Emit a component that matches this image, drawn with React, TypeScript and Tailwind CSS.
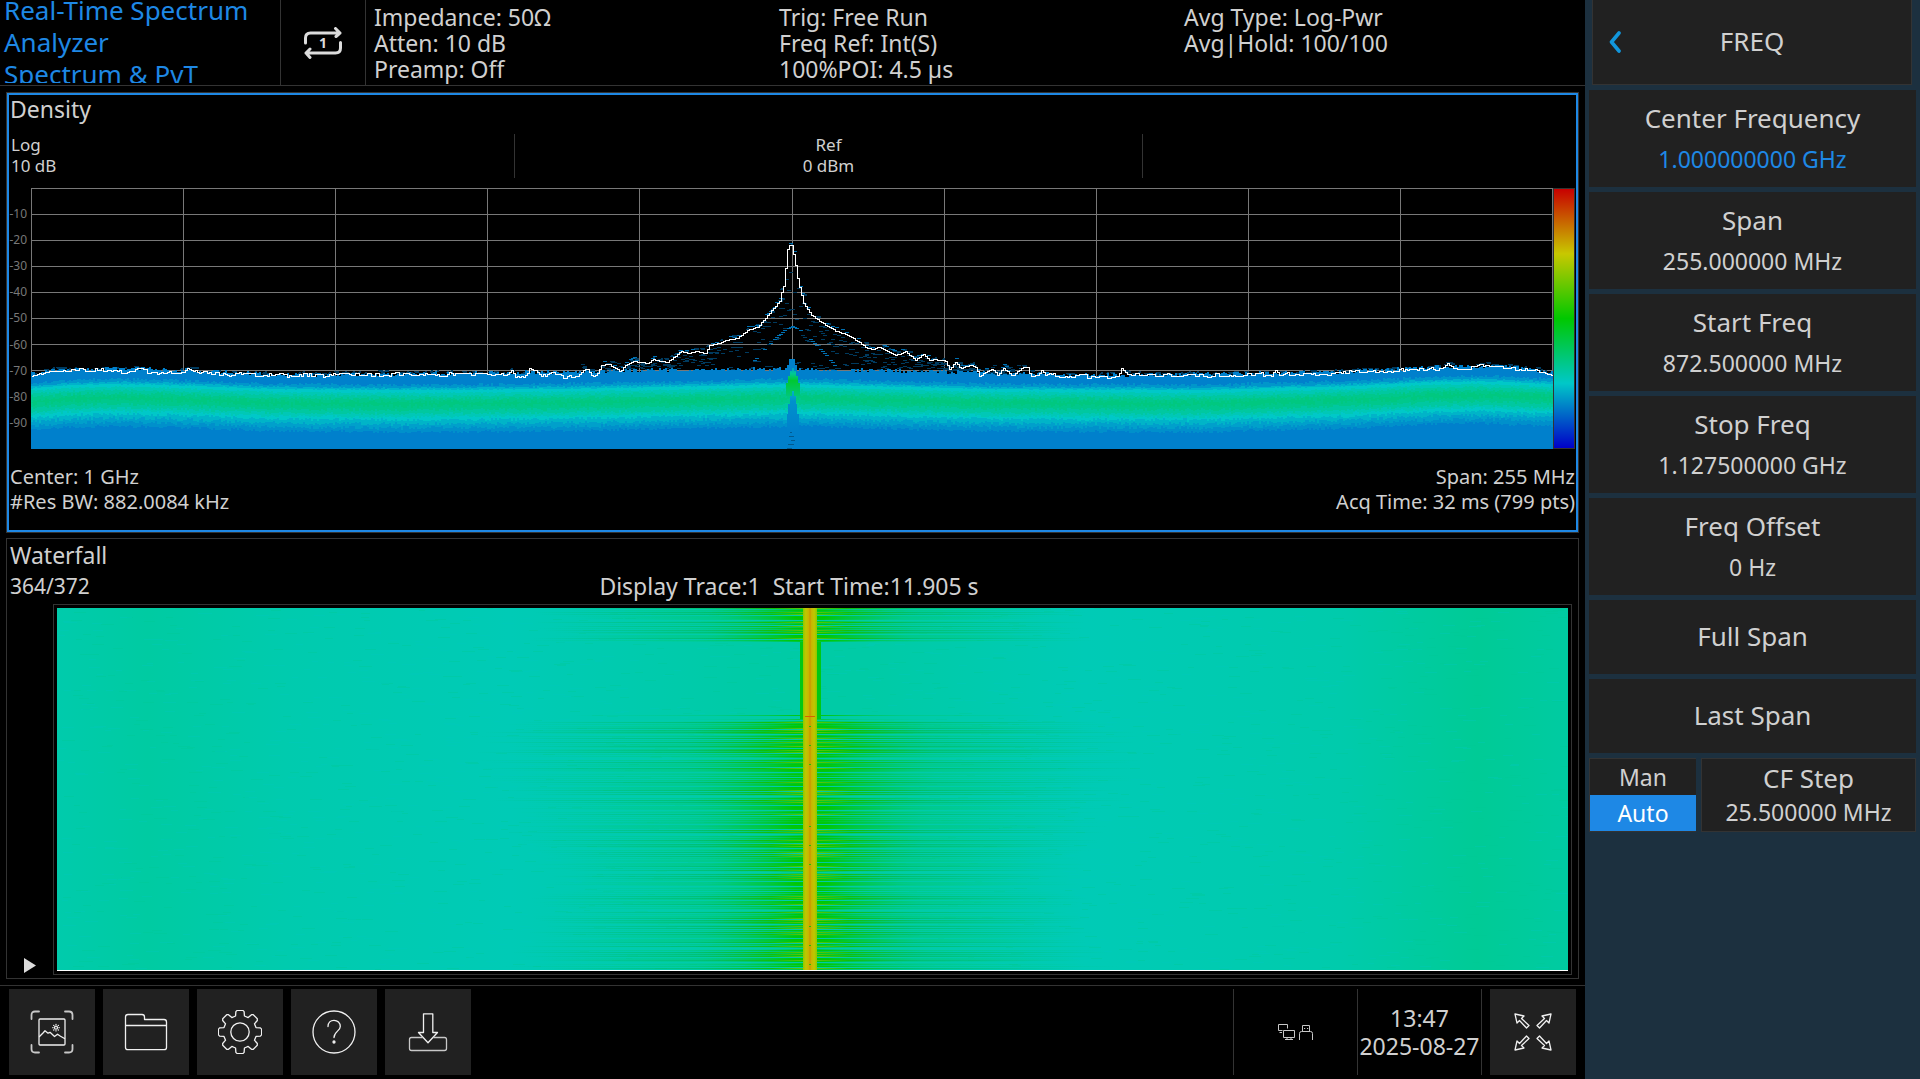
import React from 'react';

type Point = [number, number];

// Small seeded generator so the traces look the same on every render
const createRandom = (seed: number) => () => {
  seed = (seed + 0x6d2b79f5) | 0;
  let t = Math.imul(seed ^ (seed >>> 15), 1 | seed);
  t = (t + Math.imul(t ^ (t >>> 7), 61 | t)) ^ t;
  return ((t ^ (t >>> 14)) >>> 0) / 4294967296;
};

const interpolate = (points: Point[], x: number) => {
  for (let i = 1; i < points.length; i++) {
    const [x0, y0] = points[i - 1];
    const [x1, y1] = points[i];
    if (x <= x1) return y0 + ((y1 - y0) * (x - x0)) / (x1 - x0);
  }
  return points[points.length - 1][1];
};

const PLOT_W = 1522;
const PLOT_H = 261;

const maxHold: Point[] = [
  [0, 189], [6, 185], [22, 182], [60, 182], [85, 181], [88, 184], [106, 181], [112, 181], [116, 184], [150, 184],
  [155, 180], [166, 184], [200, 186], [270, 187], [350, 186], [416, 186], [419, 183], [422, 186], [475, 186],
  [479, 182], [484, 188], [492, 188], [498, 181], [504, 181], [507, 187], [516, 188], [520, 185], [532, 189],
  [546, 187], [553, 181], [556, 181], [561, 189], [566, 185], [570, 177], [577, 176], [582, 179], [589, 183],
  [592, 179], [601, 173], [617, 175], [621, 171], [636, 174], [642, 169], [650, 163], [657, 165], [664, 163],
  [674, 165], [678, 157], [687, 155], [694, 152], [706, 150], [717, 141], [726, 139], [737, 126], [744, 118],
  [748, 113], [750, 104], [752, 98], [753, 90], [755, 71], [756, 61], [757, 57], [760, 57], [761, 61], [763, 71],
  [766, 90], [769, 103], [772, 115], [776, 121], [780, 127], [789, 133], [795, 138], [805, 143], [817, 147],
  [826, 153], [836, 160], [842, 161], [847, 158], [854, 162], [864, 167], [874, 163], [884, 172], [892, 166],
  [899, 173], [902, 171], [914, 173], [918, 181], [924, 174], [929, 180], [939, 177], [944, 179], [948, 188],
  [954, 184], [961, 180], [966, 187], [972, 180], [981, 188], [991, 179], [996, 179], [999, 188], [1006, 187],
  [1010, 182], [1014, 188], [1021, 185], [1024, 188], [1086, 188], [1090, 181], [1096, 187], [1170, 187],
  [1240, 186], [1243, 181], [1247, 186], [1300, 185], [1340, 183], [1380, 181], [1410, 180], [1416, 175],
  [1422, 179], [1440, 180], [1448, 177], [1470, 179], [1500, 182], [1522, 186],
];

const floorTop: Point[] = [
  [0, 186], [22, 182], [110, 180], [168, 183], [270, 187], [420, 185], [550, 184], [620, 182], [750, 181],
  [880, 183], [960, 185], [1100, 187], [1300, 184], [1410, 179], [1470, 178], [1522, 184],
];

const bandCenter: Point[] = [
  [0, 212], [40, 209], [84, 208], [140, 209], [240, 213], [370, 214], [520, 213], [680, 210], [760, 208],
  [840, 210], [960, 213], [1170, 214], [1320, 210], [1400, 206], [1450, 205], [1522, 208],
];

const bandLevels = [
  { offset: -17, jitter: 1.4, color: '#0096cb' },
  { offset: -14, jitter: 0.8, color: '#00b2cb' },
  { offset: -12, jitter: 0.6, color: '#00c8c8' },
  { offset: -9, jitter: 0.8, color: '#00c8b4' },
  { offset: -6, jitter: 1.2, color: '#00c8a0' },
  { offset: -3, jitter: 1.6, color: '#00c88c' },
  { offset: 0, jitter: 2, color: '#00c880' },
  { offset: 4, jitter: 2, color: '#00c88c' },
  { offset: 8, jitter: 1.6, color: '#00c8a0' },
  { offset: 12, jitter: 1.4, color: '#00c8b6' },
  { offset: 15, jitter: 1.4, color: '#00c8c8' },
  { offset: 18, jitter: 1.6, color: '#00b4c8' },
  { offset: 22, jitter: 1.8, color: '#00a0cb' },
  { offset: 26, jitter: 1.8, color: '#0090cb' },
  { offset: 30, jitter: 1.4, color: '#0080cc' },
];

const stepPath = (height: (x: number) => number) => {
  let d = '';
  for (let x = 0; x < PLOT_W; x += 2) {
    const y = Math.round(height(x));
    d += x === 0 ? `M0 ${y}H2` : `V${y}H${x + 2}`;
  }
  return d;
};

const buildDensity = () => {
  const random = createRandom(7);
  const area = (curve: Point[], offset: number, jitter: number) =>
    `${stepPath((x) => interpolate(curve, x) + offset + (random() * 2 - 1) * jitter)}V${PLOT_H}H0Z`;

  const floor = area(floorTop, 0, 2);
  const bands = bandLevels.map((level) => ({ color: level.color, d: area(bandCenter, level.offset, level.jitter) }));

  let hold = 0;
  const trace = stepPath((x) => {
    const quiet = x < 550 || x > 1010;
    if (x % 4 === 0 || random() < 0.3) hold = (random() * 2 - 1) * (quiet ? 1.8 : 0.2);
    return interpolate(maxHold, x) + hold;
  });

  // Faint hits just above the noise floor and under the skirts of the carrier
  let faint = '';
  let bright = '';
  for (let x = 0; x < PLOT_W; x += 2) {
    const top = interpolate(maxHold, x);
    const floorY = interpolate(floorTop, x);
    if (random() < 0.4) faint += `M${x} ${Math.round(top - 1 - random() * 3)}h${random() < 0.4 ? 6 : 2}v2h-4z`;
    if (x > 540 && x < 990) {
      const reach = floorY - top;
      [0.08, 0.2, 0.33, 0.5].forEach((part) => {
        if (random() < 0.35) faint += `M${x} ${Math.round(top + reach * part + random() * 3)}h4v1h-4z`;
      });
      if (random() < 0.4) faint += `M${x} ${Math.round(floorY - random() * 9)}h4v1h-4z`;
      if (random() < 0.3) bright += `M${x} ${Math.round(top - 1 - random() * 3)}h4v1h-4z`;
    }
    if (x > 716 && x < 806 && random() < 0.5) {
      const y = 138 + Math.pow(Math.abs(x - 760), 1.3) * 0.3;
      bright += `M${x} ${Math.round(y)}h4v1h-4z`;
    }
  }
  return { floor, bands, trace, faint, bright };
};

const density = buildDensity();

const DensityPlot = () => (
  <svg
    className="block h-full w-full"
    viewBox={`0 0 ${PLOT_W} ${PLOT_H}`}
    preserveAspectRatio="none"
    shapeRendering="crispEdges"
    role="img"
    aria-label="Density spectrum"
  >
    <defs>
      <linearGradient id="carrier" x1="0" y1="0" x2="0" y2="1">
        <stop offset="0" stopColor="#00a0c8" />
        <stop offset="0.2" stopColor="#00c896" />
        <stop offset="0.45" stopColor="#00c832" />
        <stop offset="1" stopColor="#00c878" />
      </linearGradient>
      <linearGradient id="notch" x1="0" y1="0" x2="0" y2="1">
        <stop offset="0" stopColor="#00b4c8" />
        <stop offset="0.25" stopColor="#0090cc" />
        <stop offset="1" stopColor="#0080cc" />
      </linearGradient>
    </defs>
    <g stroke="#787878">
      {Array.from({ length: 11 }, (_, i) => {
        const x = Math.min(Math.floor(i * 152.2), PLOT_W - 1) + 0.5;
        return <line key={i} x1={x} x2={x} y1="0" y2={PLOT_H} />;
      })}
      {Array.from({ length: 10 }, (_, i) => (
        <line key={i} x1="0" x2={PLOT_W} y1={i * 26 + 0.5} y2={i * 26 + 0.5} />
      ))}
    </g>
    <path d={density.faint} fill="#003a5e" />
    <path d={density.bright} fill="#0070b2" />
    <path d={density.floor} fill="#0080cc" />
    {density.bands.map((band, i) => (
      <path key={i} d={band.d} fill={band.color} />
    ))}
    <path d="M754 192V184H756V177H758V171H764V177H766V184H768V192Z" fill="#0080cc" />
    <path d="M755 208V195H757V188H759V183H761V180H763V183H765V188H767V195H769V208Z" fill="url(#carrier)" />
    <path d="M756 244V226H757V216H759V208H761V203H763V208H765V216H766V226H768V244Z" fill="url(#notch)" />
    <path d="M759 244h2v1h-2zM758 248h5v1h-5zM760 252h4v1h-4zM757 256h6v1h-6zM756 260h5v1h-5z" fill="#005a90" />
    <path d={density.trace} fill="none" stroke="#fff" transform="translate(.5 .5)" />
  </svg>
);

const FALL_W = 1511;
const FALL_H = 362;
const CARRIER_X = 753;

const buildWaterfall = () => {
  const random = createRandom(21);
  const rows: { y: number; reach: number; fill: string; opacity: number }[] = [];
  for (let y = 0; y < FALL_H; y++) {
    if (y >= 34 && y < 107) continue;
    if (y > 107 && y < 111) continue;
    const wave = 0.5 + 0.5 * Math.cos(((y - 8) / 19) * Math.PI * 2);
    const slow = 0.9 + 0.1 * Math.sin(y / 45 - 1.5);
    const strong = y % 2 === 0;
    const gap = y % 19 === 7 || y % 19 === 17 || y % 19 === 12;
    if (gap && y !== 107) continue;
    rows.push({
      y,
      reach: Math.round((strong ? 290 : 120 + 150 * wave) * slow + random() * 50),
      fill: strong && random() < 0.45 ? 'url(#streak-hot)' : 'url(#streak)',
      opacity: strong ? 0.95 : 0.6 + 0.4 * wave,
    });
  }
  let greenNoise = '';
  let cyanNoise = '';
  for (let i = 0; i < 2600; i++) {
    const dash = `M${Math.floor(random() * FALL_W)} ${Math.floor(random() * FALL_H)}h${4 + Math.floor(random() * 16)}v1h-8z`;
    if (i % 2) greenNoise += dash;
    else cyanNoise += dash;
  }
  return { rows, greenNoise, cyanNoise };
};

const waterfall = buildWaterfall();

const WaterfallPlot = () => (
  <svg
    className="block h-full w-full"
    viewBox={`0 0 ${FALL_W} ${FALL_H}`}
    preserveAspectRatio="none"
    shapeRendering="crispEdges"
    role="img"
    aria-label="Waterfall"
  >
    <defs>
      <linearGradient id="fall-base">
        <stop offset="0" stopColor="#00cbac" />
        <stop offset="0.06" stopColor="#00cba2" />
        <stop offset="0.15" stopColor="#00cbae" />
        <stop offset="0.3" stopColor="#00cbb6" />
        <stop offset="0.46" stopColor="#00cba6" />
        <stop offset="0.54" stopColor="#00cba6" />
        <stop offset="0.68" stopColor="#00cbb6" />
        <stop offset="0.85" stopColor="#00cbac" />
        <stop offset="0.94" stopColor="#00cb96" />
        <stop offset="1" stopColor="#00cba2" />
      </linearGradient>
      <linearGradient id="streak">
        <stop offset="0" stopColor="#00c850" stopOpacity="0" />
        <stop offset="0.3" stopColor="#00c850" stopOpacity="0.35" />
        <stop offset="0.42" stopColor="#00c81e" stopOpacity="0.8" />
        <stop offset="0.47" stopColor="#00c800" />
        <stop offset="0.53" stopColor="#00c800" />
        <stop offset="0.58" stopColor="#00c81e" stopOpacity="0.8" />
        <stop offset="0.7" stopColor="#00c850" stopOpacity="0.35" />
        <stop offset="1" stopColor="#00c850" stopOpacity="0" />
      </linearGradient>
      <linearGradient id="streak-hot">
        <stop offset="0" stopColor="#00b43c" stopOpacity="0" />
        <stop offset="0.3" stopColor="#00b43c" stopOpacity="0.5" />
        <stop offset="0.43" stopColor="#14be00" />
        <stop offset="0.5" stopColor="#6ec800" />
        <stop offset="0.57" stopColor="#14be00" />
        <stop offset="0.7" stopColor="#00b43c" stopOpacity="0.5" />
        <stop offset="1" stopColor="#00b43c" stopOpacity="0" />
      </linearGradient>
      <linearGradient id="fall-carrier">
        <stop offset="0" stopColor="#8cc800" />
        <stop offset="0.2" stopColor="#bec800" />
        <stop offset="0.4" stopColor="#c8b400" />
        <stop offset="0.5" stopColor="#c89600" />
        <stop offset="0.6" stopColor="#c8b400" />
        <stop offset="0.8" stopColor="#bec800" />
        <stop offset="1" stopColor="#8cc800" />
      </linearGradient>
    </defs>
    <rect width={FALL_W} height={FALL_H} fill="url(#fall-base)" />
    <path d={waterfall.greenNoise} fill="#00c896" opacity="0.35" />
    <path d={waterfall.cyanNoise} fill="#00c8be" opacity="0.35" />
    {waterfall.rows.map((row) => (
      <rect
        key={row.y}
        x={CARRIER_X - row.reach}
        y={row.y}
        width={row.reach * 2}
        height="1"
        fill={row.fill}
        opacity={row.opacity}
      />
    ))}
    <rect x="743" y="34" width="21" height="77" fill="#00c814" />
    <rect x="746" width="14" height={FALL_H} fill="url(#fall-carrier)" />
    <rect x="748" y="108" width="10" height="1" fill="#d26400" />
    {[118, 137, 156, 218, 237, 256, 318, 337, 356].map((y) => (
      <rect key={y} x="752" y={y} width="2" height="1" fill="#1ec800" />
    ))}
  </svg>
);

const RepeatIcon = () => (
  <svg width="38" height="32" viewBox="0 0 38 32" fill="none" stroke="#dcdcdc" strokeWidth="3" strokeLinecap="round" strokeLinejoin="round">
    <path d="M1.5 16V11Q1.5 6 6.5 6H36M31.5 1.5L36 6L32 9.5" />
    <path d="M36.5 15.5V21Q36.5 26 31.5 26H2M6 30.5L2 26L6 22" />
    <text x="19" y="21" textAnchor="middle" className="text-sm font-bold" fill="#dcdcdc" stroke="none">1</text>
  </svg>
);

const Icon = ({ children }: { children: React.ReactNode }) => (
  <svg className="size-11" viewBox="0 0 44 44" fill="none" stroke="#f0f0f0" strokeWidth="1.3" strokeLinecap="round" strokeLinejoin="round">
    {children}
  </svg>
);

const gearPath = () => {
  let d = '';
  for (let i = 0; i < 8; i++) {
    const mid = (i * Math.PI) / 4 - Math.PI / 2;
    [[-0.27, 16.6], [-0.2, 20.8], [-0.13, 21.8], [0.13, 21.8], [0.2, 20.8], [0.27, 16.6]].forEach(([a, r]) => {
      const x = (22 + Math.cos(mid + a) * r).toFixed(2);
      const y = (22 + Math.sin(mid + a) * r).toFixed(2);
      d += `${d ? 'L' : 'M'}${x} ${y}`;
    });
  }
  return `${d}Z`;
};

const arrow = 'M4 4L13 6L10.5 8.5L18 15.5L15.5 18L8.5 10.5L6 13Z';

const tools = [
  {
    label: 'Screenshot',
    icon: (
      <>
        <path
          stroke="#c8c8c8"
          strokeWidth="1.8"
          d="M1.5 9V5Q1.5 1.5 5 1.5H9M35 1.5H39Q42.5 1.5 42.5 5V9M42.5 35V39Q42.5 42.5 39 42.5H35M9 42.5H5Q1.5 42.5 1.5 39V35"
        />
        <rect x="9" y="9" width="26" height="26" rx="1" />
        <path d="M9.5 26.500L13 23L15 20.8L18 23.2L20 22.3L24.5 26.5L27.5 24.2L30.5 26.2L34.5 28.5" />
        <circle cx="26" cy="17.7" r="1.5" />
        <path d="M26 14.5v.2M26 20.7v.2M22.8 17.7h.2M29 17.7h.2M23.7 15.4h.1M28.3 15.4h.1M23.7 20h.1M28.3 20h.1" />
      </>
    ),
  },
  {
    label: 'Files',
    icon: <path d="M1.5 15.5V7Q1.5 4.5 4 4.5H18Q20.5 4.5 20.5 7V9.5H40Q42.5 9.5 42.5 12V37.5Q42.5 39.7 40 39.7H4Q1.5 39.7 1.5 37.5V15.5H42.5" />,
  },
  {
    label: 'Settings',
    icon: (
      <>
        <path d={gearPath()} />
        <circle cx="22" cy="22" r="9.2" />
      </>
    ),
  },
  {
    label: 'Help',
    icon: (
      <>
        <circle cx="22" cy="22" r="21" />
        <path d="M16 16.5C16 12.5 18.5 10.3 22 10.3S28.3 12.8 28.3 16.5C28.3 21 22 21.5 22 27.5" />
        <circle cx="22" cy="32" r="1" fill="#f0f0f0" />
      </>
    ),
  },
  {
    label: 'Save',
    icon: (
      <>
        <path d="M17.5 3.8H26.8V22.5H31.5L22 32.8L12.5 22.5H17.5Z" />
        <path
          stroke="#c8c8c8"
          d="M16.5 27.5H5.5Q3.5 27.5 3.5 29.5V38.5Q3.5 40.5 5.5 40.5H38.5Q40.5 40.5 40.5 38.5V29.5Q40.5 27.5 38.5 27.5H27.5"
        />
      </>
    ),
  },
];

const frequencies = [
  { label: 'Center Frequency', value: '1.000000000 GHz', active: true },
  { label: 'Span', value: '255.000000 MHz' },
  { label: 'Start Freq', value: '872.500000 MHz' },
  { label: 'Stop Freq', value: '1.127500000 GHz' },
  { label: 'Freq Offset', value: '0 Hz' },
];

const info = [
  ['Impedance: 50Ω', 'Atten: 10 dB', 'Preamp: Off'],
  ['Trig: Free Run', 'Freq Ref: Int(S)', '100%POI: 4.5 µs'],
  ['Avg Type: Log-Pwr', 'Avg|Hold: 100/100'],
];

const Header = () => (
  <header className="flex h-[86px] shrink-0 border-b border-[#333333]">
    <h1 className="flex h-[83px] w-[280px] flex-col justify-center overflow-hidden pl-1 text-[26px] leading-8 text-[#1e88e5]">
      <span>Real-Time Spectrum</span>
      <span>Analyzer</span>
      <span>Spectrum &amp; PvT</span>
    </h1>
    <button type="button" aria-label="Sweep mode" className="flex w-[86px] items-center justify-center border-x border-[#333333]">
      <RepeatIcon />
    </button>
    <div className="grid flex-1 grid-cols-3 pt-1 pr-1 text-[23px] leading-[26px]">
      {info.map((lines) => (
        <div key={lines[0]} className="pl-2">
          {lines.map((line) => (
            <p key={line}>{line}</p>
          ))}
        </div>
      ))}
    </div>
  </header>
);

const DensityPanel = () => (
  <section className="flex flex-1 flex-col border border-[#333333]">
    <div className="flex flex-1 flex-col border-2 border-[#1e88e5] pb-4">
      <h2 className="pl-px text-[23px] leading-7">Density</h2>
      <div className="mt-[11px] grid h-11 grid-cols-[505fr_629fr_433fr] text-[17px] leading-[21px]">
        <p className="pl-0.5">
          Log
          <br />
          10 dB
        </p>
        <p className="border-x border-[#333333] text-center">
          Ref
          <br />0 dBm
        </p>
      </div>
      <div className="mt-[10px] flex flex-1">
        <div className="flex w-[22px] flex-col py-[13px] pr-1 text-right text-xs text-[#787878]">
          {[-10, -20, -30, -40, -50, -60, -70, -80, -90].map((level) => (
            <span key={level} className="flex flex-1 items-center justify-end">{level}</span>
          ))}
        </div>
        <div className="h-[261px] min-w-0 flex-1">
          <DensityPlot />
        </div>
        <div className="mr-px h-[261px] w-[22px] border border-[#333333] bg-[linear-gradient(to_bottom,#c80000,#c8c800_25%,#00c800_50%,#00c8c8_75%,#0000c8)]"></div>
      </div>
      <div className="mt-[15px] flex justify-between px-px text-xl leading-[25px]">
        <p>
          Center: 1 GHz
          <br />
          #Res BW: 882.0084 kHz
        </p>
        <p className="text-right">
          Span: 255 MHz
          <br />
          Acq Time: 32 ms (799 pts)
        </p>
      </div>
    </div>
  </section>
);

const WaterfallPanel = () => (
  <section className="flex flex-1 flex-col border border-[#333333] pb-[3px]">
    <h2 className="pl-[3px] text-[23px] leading-8">Waterfall</h2>
    <div className="grid grid-cols-[1fr_auto_1fr] items-center pr-2.5 pl-[3px] leading-[30px]">
      <span className="text-[21px] leading-[30px]">364/372</span>
      <span className="text-[23px] leading-[30px] whitespace-pre">Display Trace:1  Start Time:11.905 s</span>
    </div>
    <div className="mt-[3px] flex flex-1">
      <div className="flex w-[46px] items-end pb-0.5 pl-[17px]">
        <svg width="12" height="15" viewBox="0 0 12 15" fill="#dcdcdc">
          <path d="M0 0L12 7.5L0 15Z" />
        </svg>
      </div>
      <div className="mr-1.5 flex-1 border border-[#333333] p-[3px]">
        <div className="h-[363px] border-b border-white">
          <WaterfallPlot />
        </div>
      </div>
    </div>
  </section>
);

const Footer = () => (
  <footer className="flex shrink-0 items-start border-t border-[#333333] px-[9px] pt-[3px] pb-1">
    <div className="flex gap-2">
      {tools.map((tool) => (
        <button key={tool.label} type="button" aria-label={tool.label} className="flex size-[86px] items-center justify-center bg-[#212121]">
          <Icon>{tool.icon}</Icon>
        </button>
      ))}
    </div>
    <div className="ml-auto flex h-[86px]">
      <div className="flex w-[124px] items-center justify-center gap-1 border-l border-[#333333]">
        <svg width="17" height="17" viewBox="0 0 17 17" fill="none" stroke="#c8c8c8">
          <path d="M4.5 6.5H.5V.5H9.5V4.5M1.5 8.5H4M5.5 6.5H16.5V13.5H5.5ZM9 13.5V15.5H13V13.5M7 15.5H15" />
        </svg>
        <svg width="14" height="15" viewBox="0 0 14 15" fill="none" stroke="#c8c8c8">
          <path d="M3.5 6.5V.5H10.5V6.5M.5 15V8.5Q.5 6.5 2.5 6.5H11.5Q13.5 6.5 13.5 8.5V15M5 3.5H6.2M8 3.5H9.2" />
        </svg>
      </div>
      <div className="flex w-[125px] flex-col items-center justify-center border-x border-[#333333] text-[23px] leading-7 whitespace-nowrap">
        <time>13:47</time>
        <time>2025-08-27</time>
      </div>
    </div>
    <button type="button" aria-label="Full screen" className="ml-2 flex size-[86px] items-center justify-center bg-[#212121]">
      <Icon>
        <path d={arrow} />
        <path d={arrow} transform="matrix(-1 0 0 1 44 0)" />
        <path d={arrow} transform="matrix(1 0 0 -1 0 44)" />
        <path d={arrow} transform="matrix(-1 0 0 -1 44 44)" />
      </Icon>
    </button>
  </footer>
);

const Sidebar = () => (
  <aside className="flex w-[335px] shrink-0 flex-col gap-[5px] bg-[#1c303f] px-1">
    <div className="mr-1 ml-[3px] flex h-[85px] items-center border-x border-b border-[#333333] bg-[#212121]">
      <button type="button" aria-label="Back" className="flex w-11 justify-center">
        <svg width="12" height="22" viewBox="0 0 12 22" fill="none" stroke="#1296db" strokeWidth="3.6" strokeLinecap="round" strokeLinejoin="round">
          <path d="M10 2L2.5 11L10 20" />
        </svg>
      </button>
      <h2 className="flex-1 pr-11 pb-0.5 text-center text-[26px]">FREQ</h2>
    </div>
    {frequencies.map((item) => (
      <button key={item.label} type="button" className="flex h-[97px] flex-col items-center bg-[#212121] pt-[7px]">
        <span className="text-[26px] leading-[42px]">{item.label}</span>
        <span className={item.active ? 'text-[23px] leading-10 text-[#1e88e5]' : 'text-[23px] leading-10'}>{item.value}</span>
      </button>
    ))}
    <button type="button" className="h-[74px] bg-[#212121] pb-0.5 text-[26px]">Full Span</button>
    <button type="button" className="h-[74px] bg-[#212121] pb-0.5 text-[26px]">Last Span</button>
    <div className="flex h-[74px] gap-[5px]">
      <div className="flex w-[107px] flex-col border-y border-l border-[#333333] text-[23px]">
        <button type="button" aria-pressed="false" className="flex-1 bg-[#212121]">Man</button>
        <button type="button" aria-pressed="true" className="flex-1 bg-[#1e88e5] text-white">Auto</button>
      </div>
      <button type="button" className="flex flex-1 flex-col items-center justify-center border border-[#333333] bg-[#212121] pb-0.5">
        <span className="text-[26px] leading-9">CF Step</span>
        <span className="text-[23px] leading-8">25.500000 MHz</span>
      </button>
    </div>
  </aside>
);

const App = () => {
  return (
    <div className="flex min-h-screen bg-black font-['Noto_Sans',sans-serif] text-[#d0d0d0]">
      <div className="flex min-w-0 flex-1 flex-col">
        <Header />
        <main className="flex flex-1 flex-col gap-[5px] p-1.5">
          <DensityPanel />
          <WaterfallPanel />
        </main>
        <Footer />
      </div>
      <Sidebar />
    </div>
  );
};

export default App;
